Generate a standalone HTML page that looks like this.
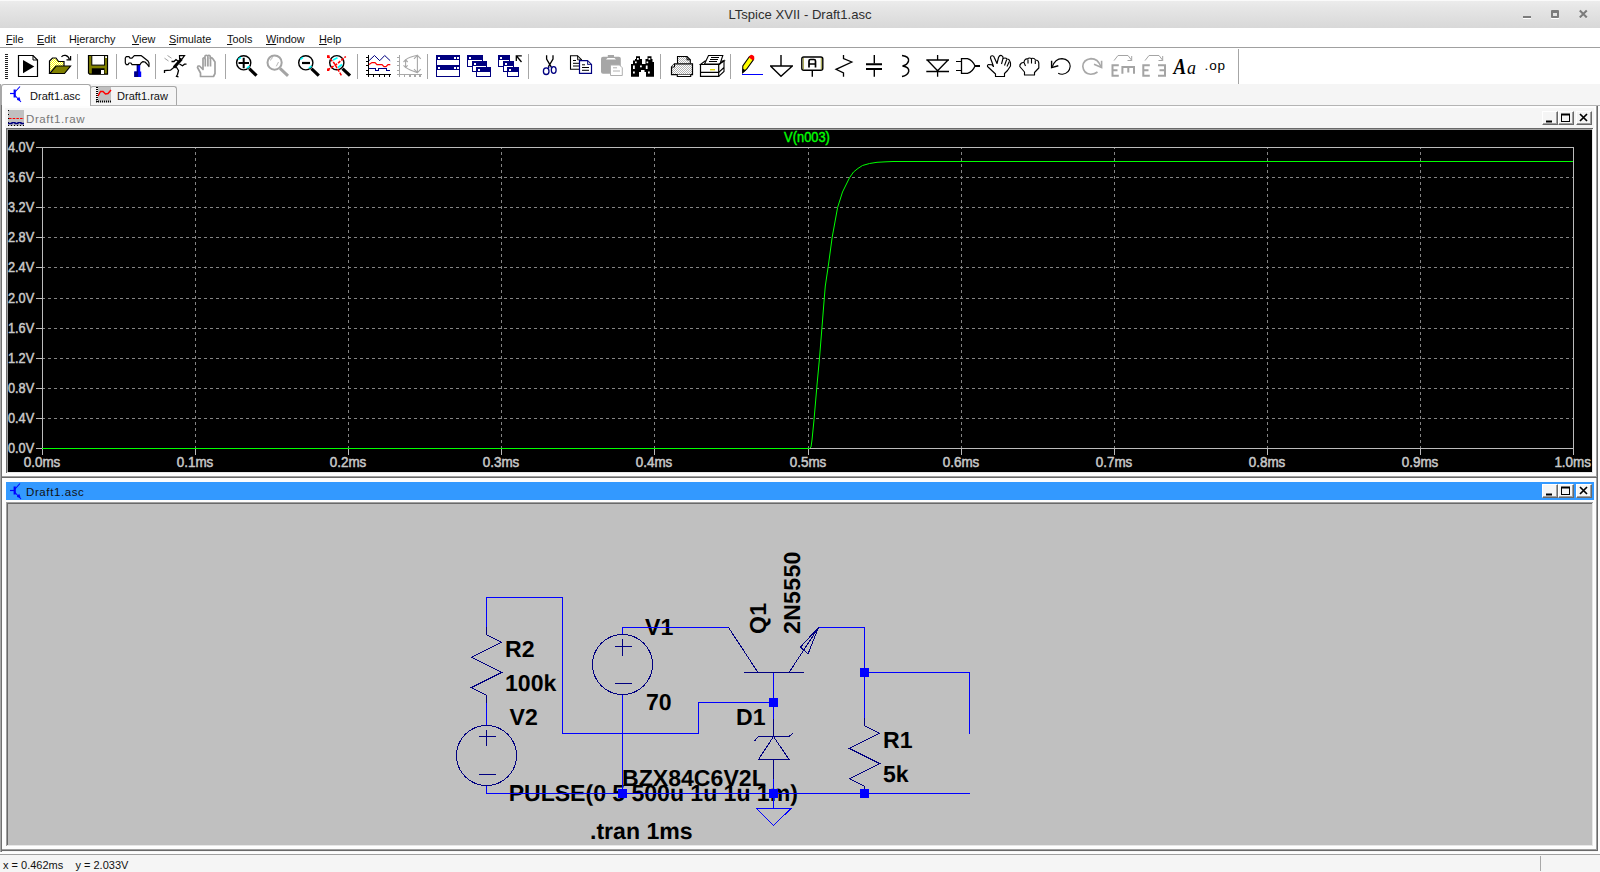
<!DOCTYPE html>
<html>
<head>
<meta charset="utf-8">
<title>LTspice XVII - Draft1.asc</title>
<style>
html,body{margin:0;padding:0;}
body{width:1600px;height:872px;overflow:hidden;background:#f5f5f5;font-family:"Liberation Sans",sans-serif;position:relative;}
.abs{position:absolute;}
#titlebar{left:0;top:0;width:1600px;height:28px;background:linear-gradient(#ececec 0%,#e6e6e6 25%,#d8d8d8 100%);border-top:1px solid #fafafa;box-sizing:border-box;}
#title{left:0;top:1px;width:1600px;height:28px;line-height:28px;text-align:center;font-size:13.5px;color:#2e2e2e;transform:scaleX(.97);}
#menubar{left:0;top:28px;width:1600px;height:19px;background:#fff;}
.mi{top:32px;font-size:11.5px;color:#111;line-height:14px;white-space:nowrap;transform-origin:0 0;transform:scaleX(.945);}
.mi u{text-decoration:underline;text-underline-offset:1px;}
#menuline{left:0;top:47px;width:1600px;height:1px;background:#a0a0a0;}
#toolbar{left:0;top:48px;width:1600px;height:36px;background:#fff;}
#tabbar{left:0;top:84px;width:1600px;height:21px;background:#f5f5f5;}
#mdi{left:0;top:105px;width:1600px;height:748px;background:#f5f5f5;}
#statusline{left:0;top:854px;width:1600px;height:1px;background:#a0a0a0;}
#status{left:0;top:855px;width:1600px;height:17px;background:#f5f5f5;}
</style>
</head>
<body>
<!-- title bar -->
<div id="titlebar" class="abs"></div>
<div id="title" class="abs">LTspice XVII - Draft1.asc</div>
<svg class="abs" style="left:1515px;top:0" width="85" height="28" viewBox="1515 0 85 28">
  <rect x="1523" y="18" width="8" height="1" fill="#fff"/>
  <rect x="1523" y="16" width="8" height="2" fill="#7c7c7c"/>
  <rect x="1551" y="18" width="8" height="1" fill="#fff"/>
  <rect x="1551" y="10" width="8" height="8" rx="1" fill="#7c7c7c"/>
  <rect x="1553" y="13" width="4" height="3" fill="#e4e4e4"/>
  <path d="M1580 11.2 L1587 18.2 M1587 11.2 L1580 18.2" stroke="#fff" stroke-width="1.6" fill="none" opacity=".8"/>
  <path d="M1579.8 10.6 L1586.8 17.6 M1586.8 10.6 L1579.8 17.6" stroke="#7c7c7c" stroke-width="2.1" fill="none"/>
</svg>

<!-- menu bar -->
<div id="menubar" class="abs"></div>
<div class="abs mi" style="left:6px"><u>F</u>ile</div>
<div class="abs mi" style="left:37px"><u>E</u>dit</div>
<div class="abs mi" style="left:69px">H<u>i</u>erarchy</div>
<div class="abs mi" style="left:132px"><u>V</u>iew</div>
<div class="abs mi" style="left:169px"><u>S</u>imulate</div>
<div class="abs mi" style="left:227px"><u>T</u>ools</div>
<div class="abs mi" style="left:266px"><u>W</u>indow</div>
<div class="abs mi" style="left:319px"><u>H</u>elp</div>
<div id="menuline" class="abs"></div>

<!-- toolbar -->
<div id="toolbar" class="abs"></div>
<svg class="abs" style="left:0;top:48px" width="1600" height="36" viewBox="0 48 1600 36" fill="none" stroke-linecap="butt" stroke-linejoin="miter">
<defs>
<pattern id="hy" width="2" height="2" patternUnits="userSpaceOnUse"><rect width="2" height="2" fill="#fff"/><rect width="1" height="1" fill="#ffff00"/><rect x="1" y="1" width="1" height="1" fill="#ffff00"/></pattern>
<pattern id="hg" width="2" height="2" patternUnits="userSpaceOnUse"><rect width="2" height="2" fill="#fff"/><rect width="1" height="1" fill="#b4b4b4"/><rect x="1" y="1" width="1" height="1" fill="#b4b4b4"/></pattern>
</defs>
<!-- gripper -->
<line x1="6.5" y1="54" x2="6.5" y2="80" stroke="#222" stroke-width="3" stroke-dasharray="1 1" shape-rendering="crispEdges"/>
<!-- separators -->
<g stroke="#a6a6a6" stroke-width="1" shape-rendering="crispEdges">
<line x1="77.5" y1="54" x2="77.5" y2="79"/><line x1="116.5" y1="54" x2="116.5" y2="79"/><line x1="155.5" y1="54" x2="155.5" y2="79"/><line x1="225.5" y1="54" x2="225.5" y2="79"/><line x1="357.5" y1="54" x2="357.5" y2="79"/><line x1="427.5" y1="54" x2="427.5" y2="79"/><line x1="528.5" y1="54" x2="528.5" y2="79"/><line x1="660.5" y1="54" x2="660.5" y2="79"/><line x1="730.5" y1="54" x2="730.5" y2="79"/><line x1="1238.5" y1="49" x2="1238.5" y2="84"/>
</g>
<!-- 1 run: page with play -->
<path d="M18.5 55.5 H33 L37.5 60 V76.5 H18.5 Z" fill="#fff" stroke="#000" stroke-width="1.2"/>
<path d="M33 55.5 V60 H37.5" stroke="#000" stroke-width="1"/>
<path d="M23 60 L34.3 66.5 L23 73.2 Z" fill="#000"/>
<!-- 2 open folder -->
<path d="M49.5 73.5 V61 L52.5 58 H56 L58.5 61.5 H64 V66" fill="url(#hy)" stroke="#000" stroke-width="1.2"/>
<path d="M49.8 73.5 L56 66 H70.5 L64.5 73.5 Z" fill="#808000" stroke="#000" stroke-width="1.2"/>
<path d="M61.5 57 C63 54.5 68 54.5 69.5 59.5" stroke="#000" stroke-width="1.2"/>
<path d="M66.5 59.8 H70.6 V56" stroke="#000" stroke-width="1.2"/>
<!-- 3 save floppy -->
<path d="M88.5 55.5 H107.5 V74.2 H89.7 L88.5 73 Z" fill="#808000" stroke="#000" stroke-width="1.2"/>
<rect x="91.8" y="55.5" width="12.8" height="9.6" fill="#fff" stroke="#000" stroke-width="1"/>
<rect x="91.8" y="68.3" width="12.8" height="5.9" fill="#000"/>
<rect x="101" y="70" width="3" height="4" fill="#fff"/>
<rect x="105.2" y="56.2" width="1.8" height="1.8" fill="#fff"/>
<!-- 4 hammer -->
<path d="M134.3 71.5 H136.8 V65 H140.2 V71.5 H141.2 V77 H134.3 Z" fill="#0000ff"/>
<path d="M134.3 71.5 H136.8 V65 H138.2 V77 H134.3 Z" fill="#000080"/>
<path d="M125.3 58 L126.3 56.6 H129 L130 58.2 H132 L134.3 55.6 H141 L143 57 L148 61 L149 63 V66.6 L147 64 L145 62 L143 61.6 L141 63 L140 64.6 H132 L131 63 H129 L128 64.6 H126.3 L125.3 63 Z" fill="#fff" stroke="#000" stroke-width="1.2" stroke-linejoin="round"/>
<!-- 5 runner -->
<g stroke="#000" stroke-width="1.3">
<path d="M179.5 55.7 H184.5 L182 59 L179.6 58.6 Z" stroke-width="1.2"/>
<path d="M181.5 59 L174 67.5" stroke-width="3"/>
<path d="M178.5 61.5 L176 59.5 L174 61.5 L171.5 61.5"/>
<path d="M179.5 64 L182.5 65.8 L184.5 64.2 L186.5 64.2"/>
<path d="M175 66.5 L170.5 70.2 L164.5 70.5 V73"/>
<path d="M176 66.5 L178.5 70.5 L177.5 74.5 L176.5 76.3 L178.5 76.8"/>
</g>
<path d="M164.5 58.2 L168.5 61 M167.5 55.5 L171.5 58.2" stroke="#a0a0a0" stroke-width="1"/>
<!-- 6 hand gray -->
<g stroke="#a0a0a0" stroke-width="1.7" stroke-linejoin="round">
<path d="M200.5 76.5 V73 L197.5 67.5 L198 66 L199.5 66 L203 69.5 V58.5 Q204 57 205 58.5 V56 Q206.3 54.5 207.6 56 V56 Q209 54.8 210.3 56.3 V58.3 Q211.8 57.3 213 59 L215 62 V73.5 L213.5 76.5 Z" fill="#fff"/>
<path d="M205.3 58.5 V66.5 M207.9 56.5 V66.5 M210.5 57.5 V66.5"/>
</g>
<!-- zoom icons -->
<g id="zin">
<circle cx="243.7" cy="62.8" r="7.1" fill="#fff" stroke="#000" stroke-width="1.4"/>
<path d="M238.3 59.5 L241 57.3 M247 68.2 L249.5 66" stroke="#00ffff" stroke-width="1.6"/>
<path d="M249.3 68.7 L256.5 75.7" stroke="#000" stroke-width="3.2"/>
<path d="M238.5 63 H249 M243.7 57.8 V68.2" stroke="#000" stroke-width="2"/>
</g>
<g>
<circle cx="274.6" cy="62.6" r="7.1" fill="#fff" stroke="#a4a4a4" stroke-width="2"/>
<path d="M270.5 60.5 Q271 58 273 57.5 M278.5 62 L276.3 66.3" stroke="#b8b8b8" stroke-width="1"/>
<path d="M280 68.3 L288 75.8" stroke="#a4a4a4" stroke-width="3"/>
</g>
<g>
<circle cx="305.8" cy="62.8" r="7.1" fill="#fff" stroke="#000" stroke-width="1.4"/>
<path d="M300.3 59.5 L303 57.3 M309 68.2 L311.5 66" stroke="#00ffff" stroke-width="1.6"/>
<path d="M311.4 68.7 L318.8 75.7" stroke="#000" stroke-width="3.2"/>
<path d="M302 63 H310" stroke="#000" stroke-width="2.2"/>
</g>
<g>
<circle cx="336.8" cy="62.7" r="7.1" fill="#fff" stroke="#000" stroke-width="1.4"/>
<path d="M333 60 L337.5 57.8 M338 67.5 L342 64.5" stroke="#00ffff" stroke-width="1.8"/>
<path d="M342.5 68.7 L350 75.7" stroke="#000" stroke-width="3.2"/>
<path d="M327.5 55.8 L334 63 L341.5 75.5 M327.5 70 L337 64 L345.8 56.5" stroke="#ff0000" stroke-width="1.5" stroke-dasharray="3 1.2"/>
<path d="M327 55.3 h2.6 v2.6 h-2.6 z M327 68.6 h2.4 v2.4 h-2.4 z" fill="#ff0000"/>
</g>
<!-- waveform icon -->
<g shape-rendering="crispEdges" stroke="#000" stroke-width="1.4">
<path d="M368.7 55 V77 M366 74.4 H390.5"/>
<path d="M366 57.5 H368 M366 61.5 H368 M366 65.7 H368 M366 70.4 H368 M373.6 75 V77 M379 75 V77 M384 75 V77 M389 75 V77" stroke-width="1"/>
</g>
<path d="M369 60.7 L374.5 55.5 L379.7 60.7 L384.7 55.5 L390.2 60.7" stroke="#000080" stroke-width="1"/>
<path d="M369 64.6 L372 62.5 H375 L377 64.6 H382 L384 66.6 H386 L388 64.6 H390.3" stroke="#ff0000" stroke-width="1.25"/>
<path d="M369 68.5 H375.2 V70.5 H378.6 V68.5 H386.2 V70.5 H390.3" stroke="#000080" stroke-width="1.3" shape-rendering="crispEdges"/>
<!-- disabled horn icon -->
<g stroke="#a8a8a8" stroke-width="1.1">
<path d="M399.6 55 V77 M397 74.5 H421.5" shape-rendering="crispEdges"/>
<path d="M397 57.5 H399 M397 61.5 H399 M397 65.7 H399 M397 70.4 H399 M404.6 75 V77 M410 75 V77 M415 75 V77 M420 75 V77" shape-rendering="crispEdges"/>
<path d="M405.6 60 V67.2 M403.5 62 L405.6 59.8 L407.7 62 M403.5 65.3 L405.6 67.4 L407.7 65.3"/>
<path d="M405.6 59.8 Q409 57 417.4 55.3 M405.6 67.4 Q409 70 417.4 72.6"/>
<path d="M417.4 55.3 V72.6 M414 58.8 L417.4 55.3 L420.8 58.8 M414 69.2 L417.4 72.6 L420.8 69.2"/>
</g>
<!-- tile -->
<g shape-rendering="crispEdges">
<rect x="436.5" y="55.5" width="23" height="21" fill="#fff" stroke="#000080" stroke-width="1"/>
<rect x="437" y="56" width="22" height="3.5" fill="#000080"/>
<rect x="437" y="65.3" width="22" height="4.2" fill="#000080"/>
<path d="M438 57 h2 v2 h-2 z M454 57 h2 v2 h-2 z M457 57 h2 v2 h-2 z M438 67 h2 v2 h-2 z M454 67 h2 v2 h-2 z M457 67 h2 v2 h-2 z" fill="#fff"/>
<!-- cascade -->
<rect x="467.5" y="55.5" width="14.5" height="11" fill="#fff" stroke="#000080"/>
<rect x="468" y="56" width="14" height="3.5" fill="#000080"/><rect x="469" y="57" width="2" height="2" fill="#fff"/>
<rect x="472.5" y="61.5" width="13.5" height="10.3" fill="#fff" stroke="#000080"/>
<rect x="473" y="62" width="13" height="3.5" fill="#000080"/><rect x="474" y="63" width="2" height="2" fill="#fff"/>
<rect x="476.5" y="67.5" width="14.3" height="9.3" fill="#fff" stroke="#000080"/>
<rect x="477" y="68" width="14" height="3.5" fill="#000080"/><rect x="478" y="69" width="2" height="2" fill="#fff"/>
<!-- cascade 2 -->
<rect x="498.5" y="55.5" width="11.4" height="11" fill="#fff" stroke="#000080"/>
<rect x="499" y="56" width="11" height="3.5" fill="#000080"/><rect x="500" y="57" width="2" height="2" fill="#fff"/>
<rect x="503.5" y="61.5" width="10.4" height="10.3" fill="#fff" stroke="#000080"/>
<rect x="504" y="62" width="10" height="3.5" fill="#000080"/><rect x="505" y="63" width="2" height="2" fill="#fff"/>
<rect x="507.5" y="67.5" width="11.3" height="9.3" fill="#fff" stroke="#000080"/>
<rect x="508" y="68" width="11" height="3.5" fill="#000080"/><rect x="509" y="69" width="2" height="2" fill="#fff"/>
</g>
<path d="M521.8 55.8 H516.3 V61 M516.5 56 L521.5 62" stroke="#000" stroke-width="1.3"/>
<!-- scissors -->
<path d="M546.6 55.3 V59 L551.2 66.8 M553 55.3 V59 L548.3 66.8" stroke="#000" stroke-width="1.3"/>
<ellipse cx="546.2" cy="71.2" rx="2.8" ry="3.3" stroke="#000080" stroke-width="1.3"/>
<ellipse cx="553.7" cy="70" rx="2.4" ry="3.4" stroke="#000080" stroke-width="1.3"/>
<path d="M549 66.5 L548.4 68.5 M550.8 66.5 L551.6 67.5" stroke="#000080" stroke-width="1.3"/>
<!-- copy -->
<path d="M570.5 55.8 H577.5 L581.5 59.8 V69.3 H570.5 Z" fill="#fff" stroke="#000" stroke-width="1.1"/>
<path d="M577.5 55.8 V59.8 H581.5 Z" fill="#c0c0c0" stroke="#000" stroke-width=".8"/>
<path d="M573 60.5 H576 M573 63.3 H579 M573 66 H579" stroke="#000" stroke-width="1"/>
<path d="M579.5 60.6 H587.5 L591.5 64.5 V73.3 H579.5 Z" fill="#fff" stroke="#000080" stroke-width="1.2"/>
<path d="M587.5 60.6 V64.5 H591.5 Z" fill="#c0c0c0" stroke="#000080" stroke-width=".8"/>
<path d="M582 64.8 H585 M582 67.5 H589 M582 70.3 H589" stroke="#000" stroke-width="1"/>
<!-- paste (disabled) -->
<rect x="601" y="56.8" width="19.8" height="17" rx="2" fill="#a6a6a6"/>
<rect x="607.8" y="55" width="6.2" height="3" fill="#a6a6a6"/>
<path d="M606 59.5 H616 L614.5 58 H607.5 Z" fill="#fff"/>
<path d="M610.5 65 H619.5 L622.3 67.8 V75.5 H610.5 Z" fill="#fff" stroke="#b0b0b0" stroke-width="1"/>
<path d="M613 67.8 H617 M613 71 H620" stroke="#b0b0b0" stroke-width="1"/>
<!-- binoculars -->
<g fill="#000">
<path d="M636 56.3 H640 V59 H642 V64 H645.5 V59 H647.5 V56.3 H651.5 V59 H652.5 V62 H654 V76.7 H646 V72 H644.5 V70 H641 V72 H639 V76.7 H631 V64 H633 V60.5 H635 V59 H636 Z"/>
</g>
<g fill="#fff">
<rect x="637" y="58" width="1.8" height="1.8"/><rect x="648.5" y="58" width="1.8" height="1.8"/>
<rect x="635" y="61.5" width="1.7" height="1.7"/><rect x="646.5" y="61.5" width="1.7" height="1.7"/>
<rect x="633" y="65.5" width="1.8" height="3.5"/><rect x="640" y="65.5" width="1.8" height="1.8"/><rect x="645.8" y="65.5" width="1.8" height="3.5"/>
<rect x="633" y="71.5" width="1.8" height="2"/><rect x="648" y="71.5" width="1.8" height="2"/>
</g>
<!-- printer 1 -->
<path d="M677.5 63.8 V56.5 H687 L690.3 59.8 V63.8" fill="url(#hg)" stroke="#000" stroke-width="1.1"/>
<path d="M687 56.5 V59.8 H690.3" stroke="#000" stroke-width="1"/>
<path d="M671.5 74.6 V67 L674.5 63.8 H692.5 V74.6 Z" fill="url(#hg)" stroke="#000" stroke-width="1.2"/>
<path d="M671.5 67 H674.5 V63.8" stroke="#000" stroke-width="1" fill="#fff"/>
<path d="M677.3 74.6 V76.5 H690.7 V74.6" stroke="#000" stroke-width="1.1" fill="#fff"/>
<!-- printer 2 -->
<path d="M700.5 64.5 L705 61 H724 L718.7 64.5 Z" fill="#fff" stroke="#000" stroke-width="1.1"/>
<path d="M708.5 55.5 H722.8 L720 64 H704.5 Z" fill="#fff" stroke="#000" stroke-width="1.1"/>
<path d="M711 57.5 H719 M710 59.5 H718 M709 61.5 H717" stroke="#000" stroke-width="1" shape-rendering="crispEdges"/>
<path d="M700.5 64.5 H718.7 V76.3 H700.5 Z" fill="#fff" stroke="#000" stroke-width="1.2"/>
<path d="M718.7 64.5 L724 60.5 V71.5 L718.7 76.3 M700.5 72.4 H718.7 L724 67.5" stroke="#000" stroke-width="1.1"/>
<rect x="710" y="69" width="5" height="1.4" fill="#e0d800"/>
<!-- pencil -->
<path d="M742 74.5 H763" stroke="#0000ff" stroke-width="1" shape-rendering="crispEdges"/>
<path d="M742.6 72.8 L742.8 66 L749.5 56.5 L753.5 59.5 L746.8 69 Z" fill="#ffff00" stroke="#000" stroke-width="1.1"/>
<path d="M742.6 72.8 L742.7 68.5 L746 70.5 Z" fill="#000"/>
<path d="M748.8 57.3 L750.5 55 Q752.5 54.3 754.2 56.5 L754.3 59 L753 60.5 Z" fill="#ff0000"/>
<!-- ground -->
<path d="M781 55 V66 M770 66 H793 M771 66.5 L781 76.3 L791.8 66.5" stroke="#000" stroke-width="1.4"/>
<!-- label -->
<rect x="801.8" y="57" width="21" height="13.3" rx="2" fill="#fff" stroke="#000" stroke-width="1.4"/>
<path d="M803.3 58 V69.5 M821.3 58 V69.5" stroke="#808000" stroke-width=".8"/>
<path d="M809 67.5 V61 Q809 59.5 810.5 59.5 H814 Q815.5 59.5 815.5 61 V67.5 M809 64 H815.5" stroke="#000" stroke-width="1.7"/>
<path d="M812.3 70.5 V76.8" stroke="#000" stroke-width="1.4"/>
<!-- resistor -->
<path d="M843.5 55 V58.5 L851.8 62 L836 69.3 L843.5 73 V76.8" stroke="#000" stroke-width="1.3"/>
<!-- capacitor -->
<path d="M874.3 55 V63.5 M874.3 70 V76.8" stroke="#000" stroke-width="1.4"/>
<path d="M866 64.2 H882 M866 69 H882" stroke="#000" stroke-width="1.9"/>
<!-- inductor -->
<path d="M902 55.5 Q909.5 56.5 908.5 61 Q907.5 65 902.5 66 Q909.5 67 908.7 71.5 Q907.5 75.5 902 76.6" stroke="#000" stroke-width="1.5"/>
<!-- diode -->
<path d="M937.6 55 V60 M926.3 60 H949 M927.5 60.3 L937.6 70.8 L947.8 60.3 M926.3 71.5 H949 M937.6 70 V76.8" stroke="#000" stroke-width="1.3"/>
<!-- gate -->
<path d="M961.5 58.6 H967.5 Q972.5 60 975 66 Q972.5 72 967.5 73.4 H961.5 Z" fill="#fff" stroke="#000" stroke-width="1.3"/>
<path d="M956 61.5 H961.5 M956 70.5 H961.5" stroke="#000" stroke-width="1" shape-rendering="crispEdges"/>
<path d="M975 66 H980" stroke="#000" stroke-width="2"/>
<!-- hand open -->
<path d="M995.5 76.5 V74 L987.5 66.5 Q987 65 988.5 64.5 L992 64.8 L993.5 66.5 L990.5 58 Q990.5 55.5 992.5 55.8 Q994 56 994.5 58 L997 63.5 L998.5 57.5 Q999.5 55 1001.5 55.5 Q1003.5 56.5 1003 58.5 Q1005.5 57.3 1007 59 Q1009 58.8 1009.8 61 Q1011 63 1010.5 66 L1007.5 70.5 L1004.5 73.5 V76.5 Z" fill="#fff" stroke="#000" stroke-width="1.15" stroke-linejoin="round"/>
<path d="M1003 58.5 L1001.5 64 M1006.7 59.5 L1004.5 65.5 M1009.3 61.5 L1007 66.5" stroke="#000" stroke-width="1.1"/>
<!-- hand closed -->
<path d="M1024.5 75 V72 L1019.8 66.5 Q1019.5 64.5 1021.5 63 L1024 62.2 Q1024.5 58.5 1027.5 59 Q1029 57.3 1031.5 58.5 Q1034 57.5 1035.5 60 Q1038.5 60 1038.8 63 V68 L1034.5 72.5 V75 Z" fill="#fff" stroke="#000" stroke-width="1.15" stroke-linejoin="round"/>
<path d="M1024 62.5 L1025.5 66 M1028 59.5 V63.5 M1031.5 59 V63.5 M1035.3 60.5 V64" stroke="#000" stroke-width="1.1"/>
<!-- undo -->
<path d="M1052.3 66.8 Q1055 58.8 1062 58.6 Q1069.8 59.5 1070.2 66.3 Q1069.5 73.5 1062.5 74.2 Q1060 74.3 1058.2 73.3" stroke="#000" stroke-width="1.15"/>
<path d="M1051.6 60.8 V67.6 L1058.3 65.8" stroke="#000" stroke-width="1.4"/>
<!-- redo -->
<path d="M1100.8 66.5 Q1098 58.6 1091 58.6 Q1083.2 59.5 1082.8 66.3 Q1083.5 73.5 1090.5 74.2 Q1094.5 74.3 1097.5 72" stroke="#a8a8a8" stroke-width="1.6"/>
<path d="M1101.6 60.8 V67.6 L1094 64.3" stroke="#a8a8a8" stroke-width="1.6"/>
<!-- rotate -->
<g stroke="#a4a4a4">
<path d="M1112.5 64.2 V76.8 M1111.5 65.2 H1118.8 M1112.5 70.3 H1117.5 M1111.5 75.8 H1118.8" stroke-width="2"/>
<path d="M1121.4 67 H1135 M1122.4 66 V73.8 M1128.3 67 V72.5 M1134 66 V73.8" stroke-width="2"/>
<path d="M1114 60.6 L1118 55.5 H1128 L1131.7 60.3 M1131.7 56 V60.5 H1127.5" stroke-width="1"/>
</g>
<!-- mirror -->
<g stroke="#a4a4a4">
<path d="M1143.3 64.2 V76.8 M1142.3 65.2 H1149.8 M1143.3 70.3 H1148.5 M1142.3 75.8 H1149.8" stroke-width="2"/>
<path d="M1165 64.2 V76.8 M1158 65.2 H1166 M1159.5 70.3 H1165 M1158 75.8 H1166" stroke-width="2"/>
<path d="M1145 60.6 L1149 55.5 H1159 L1162.7 60.3 M1162.7 56 V60.5 H1158.5" stroke-width="1"/>
</g>
<!-- Aa -->
<text x="1173.5" y="62.8" font-family="Liberation Serif" font-weight="bold" font-style="italic" font-size="19" fill="#000" stroke="none" transform="scale(1 1.18)">A</text>
<text x="1187" y="74" font-family="Liberation Serif" font-weight="normal" font-style="italic" font-size="18" fill="#000" stroke="none">a</text>
<!-- .op -->
<text x="1204.5" y="69.8" font-family="Liberation Sans" font-size="13.5" letter-spacing="0.9" fill="#000" stroke="none">.op</text>
</svg>


<!-- tab bar -->
<div id="tabbar" class="abs"></div>
<!-- MDI area -->
<div id="mdi" class="abs"></div>
<style>
.tab{box-sizing:border-box;border:1px solid #a8a8a8;border-bottom:none;border-radius:3px 3px 0 0;}
.tabt{font-size:11.5px;line-height:14px;color:#111;white-space:nowrap;transform-origin:0 0;transform:scaleX(.96);}
.wb{box-sizing:border-box;width:16px;height:14px;background:#f5f5f5;border-top:1px solid #fff;border-left:1px solid #fff;border-right:1px solid #696969;border-bottom:1px solid #696969;box-shadow:inset -1px -1px 0 #a0a0a0;}
</style>
<div class="abs" style="left:0;top:105px;width:1600px;height:1px;background:#b4b4b4"></div>
<div class="abs tab" style="left:90px;top:86px;width:87px;height:19px;background:#f5f5f5"></div>
<div class="abs tab" style="left:1px;top:84px;width:90px;height:22px;background:#fff"></div>
<!-- tab1 icon transistor -->
<svg class="abs" style="left:8px;top:85px" width="16" height="18" viewBox="8 85 16 18" fill="none" stroke="#0000ff">
<path d="M10 93.5 H14" stroke-width="1.2"/><path d="M14.7 89.5 V97.5" stroke-width="2.2"/><path d="M15 92 L20 86.5 M15 95.5 L21 102" stroke-width="1.1"/><path d="M17 99.5 L20 100.5 L19.2 97.5 Z" fill="#0000ff" stroke-width=".8"/>
</svg>
<div class="abs tabt" style="left:30px;top:89px">Draft1.asc</div>
<!-- tab2 icon plot -->
<svg class="abs" style="left:95px;top:86px" width="18" height="18" viewBox="95 86 18 18" fill="none">
<rect x="98" y="87" width="13" height="13.5" fill="#c0c0c0"/>
<path d="M97 87 V102" stroke="#000" stroke-width="2" stroke-dasharray="1 1"/><path d="M96 101.5 H111" stroke="#000" stroke-width="2" stroke-dasharray="1.2 .8"/>
<path d="M98 96 L100.5 91.5 L103 91.5 L105.5 94 L108 93.5 L111 90" stroke="#ff0000" stroke-width="1.5"/>
</svg>
<div class="abs tabt" style="left:117px;top:89px">Draft1.raw</div>
<!-- MDI client edges -->
<div class="abs" style="left:0;top:84px;width:1px;height:769px;background:#a8a8a8"></div>
<div class="abs" style="left:1px;top:105px;width:1px;height:748px;background:#707070"></div>
<div class="abs" style="left:1598px;top:106px;width:2px;height:747px;background:#fdfdfd"></div>
<div class="abs" style="left:0;top:852px;width:1600px;height:2px;background:#fdfdfd"></div>

<style>.pl{font-size:14px;line-height:16px;color:#c8c8c8;white-space:nowrap;-webkit-text-stroke:0.5px #c8c8c8}</style>
<div class="abs" style="left:2px;top:106px;width:1596px;height:372px;background:#696969"></div>
<div class="abs" style="left:2px;top:106px;width:1595px;height:371px;background:#a0a0a0"></div>
<div class="abs" style="left:2px;top:106px;width:1594px;height:370px;background:#fdfdfd"></div>
<div class="abs" style="left:5px;top:108px;width:1589px;height:20px;background:#f5f5f5"></div>
<svg class="abs" style="left:7px;top:109px" width="18" height="18" viewBox="7 109 18 18" fill="none"><rect x="8" y="110" width="16" height="16" fill="#c0c0c0"/><path d="M8.5 110 V126" stroke="#000" stroke-width="1" stroke-dasharray="1 3"/><path d="M8 125.5 H24" stroke="#000" stroke-width="1" stroke-dasharray="1 2"/><path d="M9 118.5 H24" stroke="#ff0000" stroke-width="1.2" stroke-dasharray="2.5 1.2"/><path d="M8 123.5 H12 V122.6 H15 V123.5 H18 V122.6 H21 V123.5 H24" stroke="#000080" stroke-width="1.3"/></svg>
<div class="abs wb" style="left:1542px;top:111px"></div><div class="abs wb" style="left:1558px;top:111px"></div><div class="abs wb" style="left:1576px;top:111px"></div><svg class="abs" style="left:1542px;top:111px" width="50" height="14" viewBox="1542 0 50 14" fill="none" stroke="#000"><path d="M1546 10.5 H1552" stroke-width="2"/><rect x="1561.5" y="3.5" width="8" height="7" stroke-width="1"/><path d="M1561 3.5 H1570" stroke-width="2"/><path d="M1580 3 L1587 10 M1587 3 L1580 10" stroke-width="1.7"/></svg>
<div class="abs" style="left:6px;top:128px;width:1588px;height:346px;background:#fff"></div>
<div class="abs" style="left:6px;top:128px;width:1587px;height:345px;background:#696969"></div>
<div class="abs" style="left:7px;top:129px;width:1586px;height:344px;background:#e8e8e8"></div>
<div class="abs" style="left:7px;top:129px;width:1585px;height:343px;background:#a0a0a0"></div>
<div class="abs" style="left:8px;top:130px;width:1584px;height:342px;background:#000"></div>
<div class="abs" style="left:26px;top:111.6px;font-size:11.5px;line-height:14px;color:#777;letter-spacing:0.6px">Draft1.raw</div>
<svg class="abs" style="left:8px;top:130px" width="1584" height="342" viewBox="8 130 1584 342" shape-rendering="crispEdges"><line x1="195.5" y1="147" x2="195.5" y2="448" stroke="#848484" stroke-width="1" stroke-dasharray="3 3" stroke-dashoffset="1"/><line x1="348.5" y1="147" x2="348.5" y2="448" stroke="#848484" stroke-width="1" stroke-dasharray="3 3" stroke-dashoffset="1"/><line x1="501.5" y1="147" x2="501.5" y2="448" stroke="#848484" stroke-width="1" stroke-dasharray="3 3" stroke-dashoffset="1"/><line x1="654.5" y1="147" x2="654.5" y2="448" stroke="#848484" stroke-width="1" stroke-dasharray="3 3" stroke-dashoffset="1"/><line x1="808.5" y1="147" x2="808.5" y2="448" stroke="#848484" stroke-width="1" stroke-dasharray="3 3" stroke-dashoffset="1"/><line x1="961.5" y1="147" x2="961.5" y2="448" stroke="#848484" stroke-width="1" stroke-dasharray="3 3" stroke-dashoffset="1"/><line x1="1114.5" y1="147" x2="1114.5" y2="448" stroke="#848484" stroke-width="1" stroke-dasharray="3 3" stroke-dashoffset="1"/><line x1="1267.5" y1="147" x2="1267.5" y2="448" stroke="#848484" stroke-width="1" stroke-dasharray="3 3" stroke-dashoffset="1"/><line x1="1420.5" y1="147" x2="1420.5" y2="448" stroke="#848484" stroke-width="1" stroke-dasharray="3 3" stroke-dashoffset="1"/><line x1="42" y1="177.5" x2="1573" y2="177.5" stroke="#848484" stroke-width="1" stroke-dasharray="3 3"/><line x1="42" y1="207.5" x2="1573" y2="207.5" stroke="#848484" stroke-width="1" stroke-dasharray="3 3"/><line x1="42" y1="237.5" x2="1573" y2="237.5" stroke="#848484" stroke-width="1" stroke-dasharray="3 3"/><line x1="42" y1="267.5" x2="1573" y2="267.5" stroke="#848484" stroke-width="1" stroke-dasharray="3 3"/><line x1="42" y1="298.5" x2="1573" y2="298.5" stroke="#848484" stroke-width="1" stroke-dasharray="3 3"/><line x1="42" y1="328.5" x2="1573" y2="328.5" stroke="#848484" stroke-width="1" stroke-dasharray="3 3"/><line x1="42" y1="358.5" x2="1573" y2="358.5" stroke="#848484" stroke-width="1" stroke-dasharray="3 3"/><line x1="42" y1="388.5" x2="1573" y2="388.5" stroke="#848484" stroke-width="1" stroke-dasharray="3 3"/><line x1="42" y1="418.5" x2="1573" y2="418.5" stroke="#848484" stroke-width="1" stroke-dasharray="3 3"/><rect x="42.5" y="147.5" width="1531" height="301" fill="none" stroke="#bcbcbc" stroke-width="1"/><line x1="36" y1="147.5" x2="42" y2="147.5" stroke="#bcbcbc"/><line x1="36" y1="177.5" x2="42" y2="177.5" stroke="#bcbcbc"/><line x1="36" y1="207.5" x2="42" y2="207.5" stroke="#bcbcbc"/><line x1="36" y1="237.5" x2="42" y2="237.5" stroke="#bcbcbc"/><line x1="36" y1="267.5" x2="42" y2="267.5" stroke="#bcbcbc"/><line x1="36" y1="298.5" x2="42" y2="298.5" stroke="#bcbcbc"/><line x1="36" y1="328.5" x2="42" y2="328.5" stroke="#bcbcbc"/><line x1="36" y1="358.5" x2="42" y2="358.5" stroke="#bcbcbc"/><line x1="36" y1="388.5" x2="42" y2="388.5" stroke="#bcbcbc"/><line x1="36" y1="418.5" x2="42" y2="418.5" stroke="#bcbcbc"/><line x1="36" y1="448.5" x2="42" y2="448.5" stroke="#bcbcbc"/><line x1="42.5" y1="448" x2="42.5" y2="455" stroke="#bcbcbc"/><line x1="195.5" y1="448" x2="195.5" y2="455" stroke="#bcbcbc"/><line x1="348.5" y1="448" x2="348.5" y2="455" stroke="#bcbcbc"/><line x1="501.5" y1="448" x2="501.5" y2="455" stroke="#bcbcbc"/><line x1="654.5" y1="448" x2="654.5" y2="455" stroke="#bcbcbc"/><line x1="808.5" y1="448" x2="808.5" y2="455" stroke="#bcbcbc"/><line x1="961.5" y1="448" x2="961.5" y2="455" stroke="#bcbcbc"/><line x1="1114.5" y1="448" x2="1114.5" y2="455" stroke="#bcbcbc"/><line x1="1267.5" y1="448" x2="1267.5" y2="455" stroke="#bcbcbc"/><line x1="1420.5" y1="448" x2="1420.5" y2="455" stroke="#bcbcbc"/><line x1="1573.5" y1="448" x2="1573.5" y2="455" stroke="#bcbcbc"/><path d="M42 448.5 L809.5 448.5 L811 447 L812 440 L814 420 L817 385 L819.5 358 L822 327 L824.3 298 L825.3 286 L828.2 266.6 L832.2 237.2 L837.6 207.5 L842.5 192 L849.6 177.6 L853.5 172 L858 168.4 L862.5 165.5 L869.5 163.5 L877 162.3 L886 161.8 L893 161.5 L1573 161.5" fill="none" stroke="#00ff00" stroke-width="1" shape-rendering="auto"/></svg>
<div class="abs pl" style="left:8.2px;top:139.4px;transform-origin:0 0;transform:scaleX(.91)">4.0V</div>
<div class="abs pl" style="left:8.2px;top:169.4px;transform-origin:0 0;transform:scaleX(.91)">3.6V</div>
<div class="abs pl" style="left:8.2px;top:199.4px;transform-origin:0 0;transform:scaleX(.91)">3.2V</div>
<div class="abs pl" style="left:8.2px;top:229.4px;transform-origin:0 0;transform:scaleX(.91)">2.8V</div>
<div class="abs pl" style="left:8.2px;top:259.4px;transform-origin:0 0;transform:scaleX(.91)">2.4V</div>
<div class="abs pl" style="left:8.2px;top:290.4px;transform-origin:0 0;transform:scaleX(.91)">2.0V</div>
<div class="abs pl" style="left:8.2px;top:320.4px;transform-origin:0 0;transform:scaleX(.91)">1.6V</div>
<div class="abs pl" style="left:8.2px;top:350.4px;transform-origin:0 0;transform:scaleX(.91)">1.2V</div>
<div class="abs pl" style="left:8.2px;top:380.4px;transform-origin:0 0;transform:scaleX(.91)">0.8V</div>
<div class="abs pl" style="left:8.2px;top:410.4px;transform-origin:0 0;transform:scaleX(.91)">0.4V</div>
<div class="abs pl" style="left:8.2px;top:440.4px;transform-origin:0 0;transform:scaleX(.91)">0.0V</div>
<div class="abs pl" style="left:12px;top:453.6px;width:60px;text-align:center;transform:scaleX(.96)">0.0ms</div>
<div class="abs pl" style="left:165px;top:453.6px;width:60px;text-align:center;transform:scaleX(.96)">0.1ms</div>
<div class="abs pl" style="left:318px;top:453.6px;width:60px;text-align:center;transform:scaleX(.96)">0.2ms</div>
<div class="abs pl" style="left:471px;top:453.6px;width:60px;text-align:center;transform:scaleX(.96)">0.3ms</div>
<div class="abs pl" style="left:624px;top:453.6px;width:60px;text-align:center;transform:scaleX(.96)">0.4ms</div>
<div class="abs pl" style="left:778px;top:453.6px;width:60px;text-align:center;transform:scaleX(.96)">0.5ms</div>
<div class="abs pl" style="left:931px;top:453.6px;width:60px;text-align:center;transform:scaleX(.96)">0.6ms</div>
<div class="abs pl" style="left:1084px;top:453.6px;width:60px;text-align:center;transform:scaleX(.96)">0.7ms</div>
<div class="abs pl" style="left:1237px;top:453.6px;width:60px;text-align:center;transform:scaleX(.96)">0.8ms</div>
<div class="abs pl" style="left:1390px;top:453.6px;width:60px;text-align:center;transform:scaleX(.96)">0.9ms</div>
<div class="abs pl" style="left:1531px;top:453.6px;width:60px;text-align:right;transform-origin:100% 0;transform:scaleX(.96)">1.0ms</div>
<div class="abs" style="left:757px;top:129px;width:100px;text-align:center;font-size:14px;line-height:16px;color:#00ff00;transform:scaleX(.92);-webkit-text-stroke:0.4px #00ff00">V(n003)</div>
<div class="abs" style="left:2px;top:478px;width:1596px;height:373px;background:#696969"></div>
<div class="abs" style="left:2px;top:478px;width:1595px;height:372px;background:#a0a0a0"></div>
<div class="abs" style="left:2px;top:478px;width:1594px;height:371px;background:#fdfdfd"></div>
<div class="abs" style="left:6px;top:482px;width:1588px;height:18px;background:#3399ff"></div>
<div class="abs" style="left:26px;top:485px;font-size:11.5px;line-height:14px;color:#111;letter-spacing:0.6px">Draft1.asc</div>
<svg class="abs" style="left:8px;top:482px" width="16" height="18" viewBox="8 482 16 18" fill="none" stroke="#0000ff"><path d="M10 490.5 H14" stroke-width="1.2"/><path d="M14.7 486.5 V494.5" stroke-width="2.2"/><path d="M15 489 L20 483.5 M15 492.5 L21 499" stroke-width="1.1"/><path d="M17 496.5 L20 497.5 L19.2 494.5 Z" fill="#0000ff" stroke-width=".8"/></svg>
<div class="abs wb" style="left:1542px;top:484px"></div><div class="abs wb" style="left:1558px;top:484px"></div><div class="abs wb" style="left:1576px;top:484px"></div><svg class="abs" style="left:1542px;top:484px" width="50" height="14" viewBox="1542 0 50 14" fill="none" stroke="#000"><path d="M1546 10.5 H1552" stroke-width="2"/><rect x="1561.5" y="3.5" width="8" height="7" stroke-width="1"/><path d="M1561 3.5 H1570" stroke-width="2"/><path d="M1580 3 L1587 10 M1587 3 L1580 10" stroke-width="1.7"/></svg>
<div class="abs" style="left:6px;top:502px;width:1588px;height:345px;background:#fff"></div>
<div class="abs" style="left:6px;top:502px;width:1587px;height:344px;background:#a0a0a0"></div>
<div class="abs" style="left:7px;top:503px;width:1586px;height:343px;background:#e8e8e8"></div>
<div class="abs" style="left:7px;top:503px;width:1585px;height:342px;background:#696969"></div>
<div class="abs" style="left:8px;top:504px;width:1584px;height:341px;background:#c0c0c0"></div>
<style>.st{font-size:23.1px;line-height:26px;text-rendering:geometricPrecision;font-weight:bold;color:#000;white-space:nowrap}</style>
<div class="abs st" style="left:505px;top:636px;">R2</div>
<div class="abs st" style="left:505px;top:670px;">100k</div>
<div class="abs st" style="left:509.5px;top:704px;">V2</div>
<div class="abs st" style="left:645px;top:614px;">V1</div>
<div class="abs st" style="left:646px;top:689px;">70</div>
<div class="abs st" style="left:736px;top:704px;">D1</div>
<div class="abs st" style="left:883px;top:727px;">R1</div>
<div class="abs st" style="left:883px;top:761px;">5k</div>
<div class="abs st" style="left:508.7px;top:780px;letter-spacing:-0.04px">PULSE(0 5 500u 1u 1u 1m)</div>
<div class="abs st" style="left:622px;top:765px;">BZX84C6V2L</div>
<div class="abs st" style="left:590px;top:818px;">.tran 1ms</div>
<div class="abs st" style="left:745px;top:633.7px;letter-spacing:0.3px;transform-origin:0 0;transform:rotate(-90deg)">Q1</div>
<div class="abs st" style="left:779px;top:633.7px;letter-spacing:0.3px;transform-origin:0 0;transform:rotate(-90deg)">2N5550</div>
<svg class="abs" style="left:8px;top:504px" width="1584" height="341" viewBox="8 504 1584 341" shape-rendering="crispEdges" fill="none" stroke-width="1"><polyline points="486.5,627.5 486.5,597.5 562.5,597.5 562.5,733.5 698.5,733.5 698.5,702.5 773.5,702.5" stroke="#0000ff" /><polyline points="486.5,785.5 486.5,793.5 969.5,793.5" stroke="#0000ff" /><polyline points="622.5,634.5 622.5,627.5 728.5,627.5" stroke="#0000ff" /><polyline points="622.5,694.5 622.5,793.5" stroke="#0000ff" /><polyline points="818.5,627.5 864.5,627.5 864.5,717.5" stroke="#0000ff" /><polyline points="864.5,672.5 969.5,672.5 969.5,733.5" stroke="#0000ff" /><polyline points="773.5,672.5 773.5,718.5" stroke="#0000ff" /><polyline points="773.5,778.5 773.5,808.5" stroke="#0000ff" /><polyline points="486.5,702.5 486.5,725.5" stroke="#0000ff" /><polyline points="486.5,627 486.5,634.58 501.66,642.16 471.34,657.32 501.66,672.48 471.34,687.64 486.5,695.22 486.5,702.8" stroke="#000080" /><polyline points="864.5,718.1 864.5,725.68 879.66,733.26 849.34,748.42 879.66,763.58 849.34,778.74 864.5,786.32 864.5,793.9" stroke="#000080" /><circle cx="486.5" cy="755.5" r="30" stroke="#000080"/><polyline points="478.5,736.5 495.5,736.5" stroke="#000080" /><polyline points="486.5,729.5 486.5,745.5" stroke="#000080" /><polyline points="478.5,774.5 495.5,774.5" stroke="#000080" /><circle cx="622.5" cy="664.5" r="30" stroke="#000080"/><polyline points="614.5,646.5 631.5,646.5" stroke="#000080" /><polyline points="622.5,638.5 622.5,655.5" stroke="#000080" /><polyline points="614.5,683.5 631.5,683.5" stroke="#000080" /><polyline points="728.5,627.5 758,672.5" stroke="#000080" /><polyline points="743.5,672.5 803.5,672.5" stroke="#000080" /><polyline points="789,672.5 818.5,627.5" stroke="#000080" /><polyline points="818.5,627.5 800.5,647 808,654 818.5,627.5" stroke="#000080" /><polyline points="773.5,718.5 773.5,736.5" stroke="#000080" /><polyline points="754.5,741 758.5,736.5 789,736.5 793,733.5" stroke="#000080" /><polyline points="773.5,736.5 758.5,759.5 789,759.5 773.5,736.5" stroke="#000080" /><polyline points="773.5,759.5 773.5,778.5" stroke="#000080" /><polyline points="756.5,808.5 791,808.5 773.5,825.5 756.5,808.5" stroke="#0000ff" /><rect x="618" y="789" width="9" height="9" fill="#0000ff" stroke="none"/><rect x="769" y="789" width="9" height="9" fill="#0000ff" stroke="none"/><rect x="860" y="789" width="9" height="9" fill="#0000ff" stroke="none"/><rect x="860" y="668" width="9" height="9" fill="#0000ff" stroke="none"/><rect x="769" y="698" width="9" height="9" fill="#0000ff" stroke="none"/></svg>

<!-- status bar -->
<div id="statusline" class="abs"></div>
<div id="status" class="abs"></div>
<div class="abs" style="left:3px;top:859px;font-size:11px;line-height:13px;color:#111;white-space:pre">x = 0.462ms    y = 2.033V</div>
<div class="abs" style="left:1540px;top:856px;width:1px;height:15px;background:#a8a8a8"></div>
</body>
</html>
